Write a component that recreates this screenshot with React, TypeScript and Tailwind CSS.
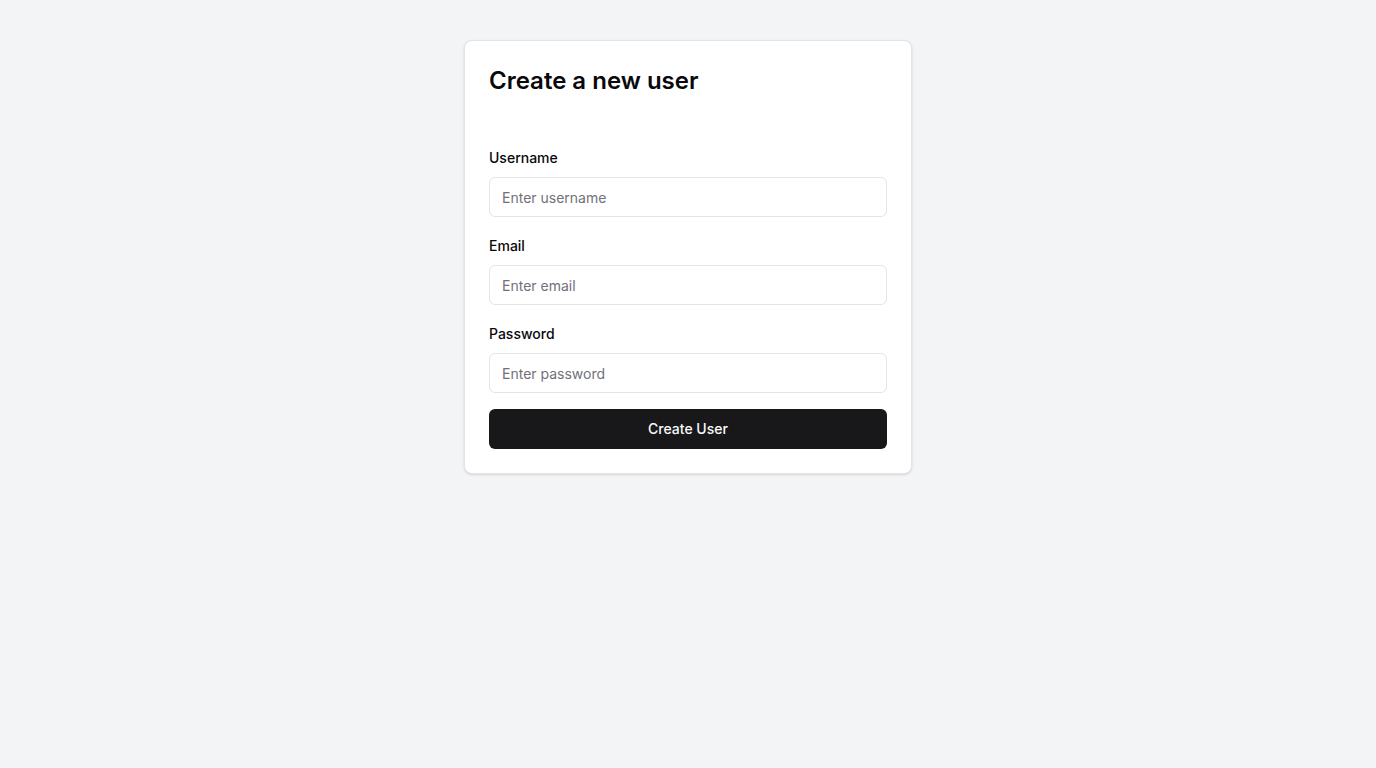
export default function App() {
  return (
    <div className="min-h-screen bg-gray-100 font-['Inter',sans-serif] text-[#09090b]">
      <div className="mx-auto pt-10 w-full max-w-md">
        <div className="rounded-lg border border-[#e4e4e7] bg-white shadow-sm">
          <div className="p-6">
            <h1 className="text-2xl font-semibold">Create a new user</h1>
          </div>
          <form className="px-6 pb-6 pt-6 flex flex-col gap-4" onSubmit={(e) => e.preventDefault()}>
            <div>
              <div>
                <label className="text-sm font-medium">Username</label>
              </div>
              <input
                className="mt-2 h-10 w-full rounded-md border border-[#e4e4e7] bg-white px-3 text-sm placeholder:text-[#71717a] outline-none"
                placeholder="Enter username"
              />
            </div>
            <div>
              <div>
                <label className="text-sm font-medium">Email</label>
              </div>
              <input
                className="mt-2 h-10 w-full rounded-md border border-[#e4e4e7] bg-white px-3 text-sm placeholder:text-[#71717a] outline-none"
                placeholder="Enter email"
              />
            </div>
            <div>
              <div>
                <label className="text-sm font-medium">Password</label>
              </div>
              <input
                type="password"
                className="mt-2 h-10 w-full rounded-md border border-[#e4e4e7] bg-white px-3 text-sm placeholder:text-[#71717a] outline-none"
                placeholder="Enter password"
              />
            </div>
            <button className="h-10 w-full rounded-md bg-[#18181b] text-sm font-medium text-[#fafafa]">
              Create User
            </button>
          </form>
        </div>
      </div>
    </div>
  )
}
